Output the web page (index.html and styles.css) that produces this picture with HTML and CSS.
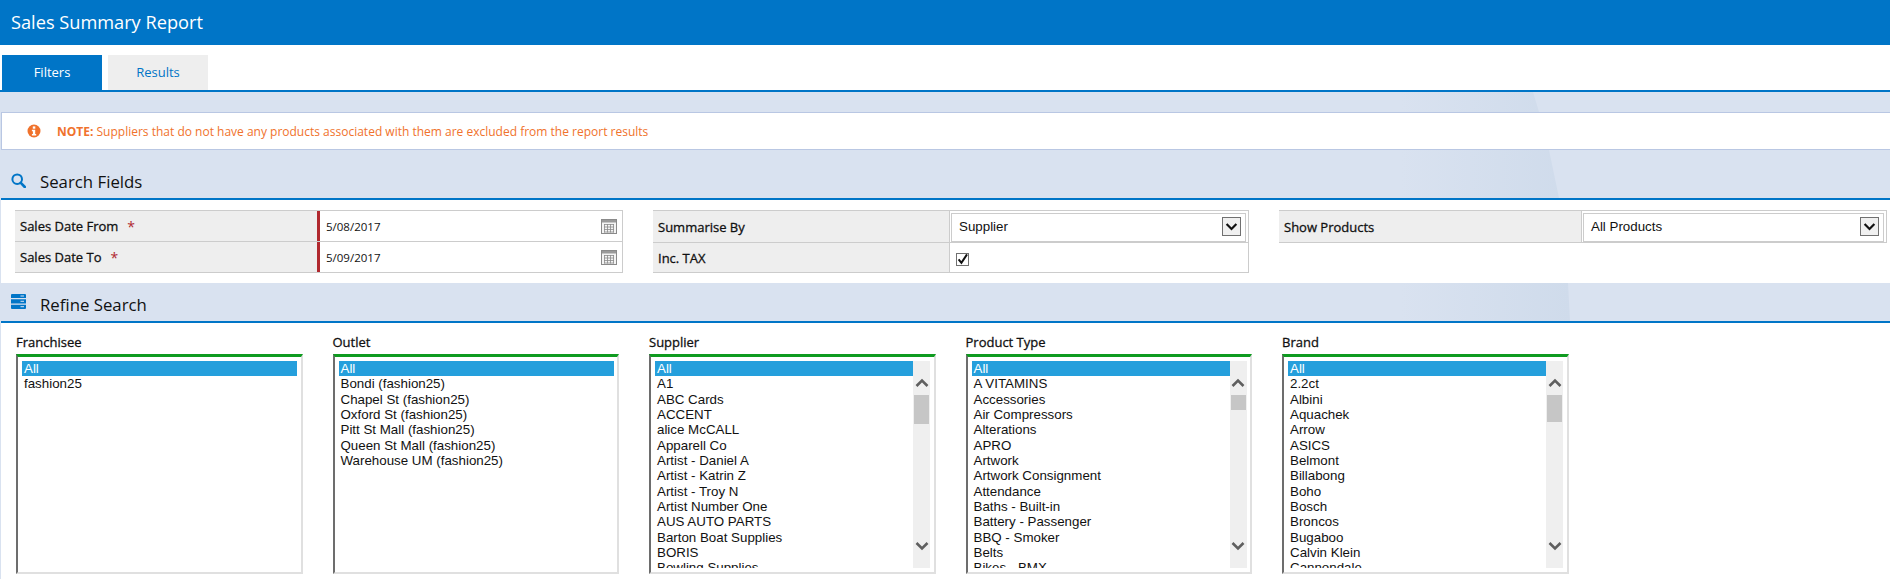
FILE: index.html
```html
<!DOCTYPE html>
<html lang="en">
<head>
<meta charset="utf-8">
<title>Sales Summary Report</title>
<link rel="stylesheet" href="styles.css">
</head>
<body>
<header class="app-title">Sales Summary Report</header>
<nav class="tabs">
  <a class="tab tab-active">Filters</a>
  <a class="tab">Results</a>
</nav>
<div class="band-gap"></div>
<div class="note">
  <svg class="note-icon" viewBox="0 0 14 14"><circle cx="7" cy="7" r="6.5" fill="#f0722c"/><rect x="5.8" y="2.4" width="2.5" height="2.3" fill="#fff"/><path d="M4.9 5.8h3.3v4.3h1v1.4H4.9v-1.4h1V7.2h-1z" fill="#fff"/></svg>
  <span class="note-text"><b>NOTE:</b> Suppliers that do not have any products associated with them are excluded from the report results</span>
</div>
<h2 class="section-head section-search">
  <svg class="section-icon" viewBox="0 0 15 15"><circle cx="6.2" cy="6.2" r="4.8" fill="none" stroke="#0075c7" stroke-width="2"/><path d="M9.8 9.8l4 4.2" stroke="#0075c7" stroke-width="2.6" stroke-linecap="round"/></svg>
  Search Fields
</h2>
<section class="panel panel-fields">
  <div class="ftable ftable-dates">
    <div class="frow">
      <div class="flabel">Sales Date From <span class="req">*</span></div>
      <div class="fvalue fvalue-date">5/08/2017
        <svg class="cal" viewBox="0 0 16 15"><rect x=".5" y=".5" width="15" height="14" fill="#f4f4f4" stroke="#8a8a8a"/><rect x="1" y="1" width="14" height="2.5" fill="#9a9a9a"/><path d="M3 5.5h10M3 8h10M3 10.5h10M3 13h10M3.5 5v8.5M6.5 5v8.5M9.5 5v8.5M12.5 5v8.5" stroke="#8a8a8a" stroke-width=".8" fill="none"/></svg>
      </div>
    </div>
    <div class="frow">
      <div class="flabel">Sales Date To <span class="req">*</span></div>
      <div class="fvalue fvalue-date">5/09/2017
        <svg class="cal" viewBox="0 0 16 15"><rect x=".5" y=".5" width="15" height="14" fill="#f4f4f4" stroke="#8a8a8a"/><rect x="1" y="1" width="14" height="2.5" fill="#9a9a9a"/><path d="M3 5.5h10M3 8h10M3 10.5h10M3 13h10M3.5 5v8.5M6.5 5v8.5M9.5 5v8.5M12.5 5v8.5" stroke="#8a8a8a" stroke-width=".8" fill="none"/></svg>
      </div>
    </div>
  </div>
  <div class="ftable ftable-summary">
    <div class="frow frow-select">
      <div class="flabel">Summarise By</div>
      <div class="fvalue fvalue-select"><div class="select">Supplier
        <span class="select-btn"><svg viewBox="0 0 17 17"><path d="M3.6 6l4.9 5 4.9-5" fill="none" stroke="#111" stroke-width="2.2"/></svg></span>
      </div></div>
    </div>
    <div class="frow frow-check">
      <div class="flabel">Inc. TAX</div>
      <div class="fvalue fvalue-check"><span class="checkbox"><svg viewBox="0 0 13 13"><path d="M2.6 6.4l2.8 3.4L11 1.4" fill="none" stroke="#111" stroke-width="2"/></svg></span></div>
    </div>
  </div>
  <div class="ftable ftable-show">
    <div class="frow frow-select">
      <div class="flabel">Show Products</div>
      <div class="fvalue fvalue-select"><div class="select">All Products
        <span class="select-btn"><svg viewBox="0 0 17 17"><path d="M3.6 6l4.9 5 4.9-5" fill="none" stroke="#111" stroke-width="2.2"/></svg></span>
      </div></div>
    </div>
  </div>
</section>
<h2 class="section-head section-refine">
  <svg class="section-icon" viewBox="0 0 15 15"><path d="M1 0h13a1 1 0 0 1 1 1v3H0V1a1 1 0 0 1 1-1zM0 5.3h15v4.1H0zM0 10.7h15V14a1 1 0 0 1-1 1H1a1 1 0 0 1-1-1z" fill="#0075c7"/><path d="M9.5 2h3.5M9.5 7.3h3.5M9.5 12.7h3.5" stroke="#d9e2f0" stroke-width="1"/></svg>
  Refine Search
</h2>
<section class="panel panel-lists">
  <div class="list-col">
    <div class="list-label">Franchisee</div>
    <div class="listbox">
      <ul class="list-items">
        <li class="selected">All</li><li>fashion25</li>
      </ul>
    </div>
  </div>
  <div class="list-col">
    <div class="list-label">Outlet</div>
    <div class="listbox">
      <ul class="list-items">
        <li class="selected">All</li><li>Bondi (fashion25)</li><li>Chapel St (fashion25)</li><li>Oxford St (fashion25)</li><li>Pitt St Mall (fashion25)</li><li>Queen St Mall (fashion25)</li><li>Warehouse UM (fashion25)</li>
      </ul>
    </div>
  </div>
  <div class="list-col">
    <div class="list-label">Supplier</div>
    <div class="listbox">
      <ul class="list-items">
        <li class="selected">All</li><li>A1</li><li>ABC Cards</li><li>ACCENT</li><li>alice McCALL</li><li>Apparell Co</li><li>Artist - Daniel A</li><li>Artist - Katrin Z</li><li>Artist - Troy N</li><li>Artist Number One</li><li>AUS AUTO PARTS</li><li>Barton Boat Supplies</li><li>BORIS</li><li>Bowling Supplies</li>
      </ul>
      <div class="scrollbar">
        <svg class="sb-arrow sb-up" viewBox="0 0 14 10"><path d="M1.5 8L7 2.5 12.5 8" fill="none" stroke="#5f5f5f" stroke-width="2.6"/></svg>
        <div class="sb-thumb" style="height:29px"></div>
        <svg class="sb-arrow sb-down" viewBox="0 0 14 10"><path d="M1.5 2L7 7.5 12.5 2" fill="none" stroke="#5f5f5f" stroke-width="2.6"/></svg>
      </div>
    </div>
  </div>
  <div class="list-col">
    <div class="list-label">Product Type</div>
    <div class="listbox">
      <ul class="list-items">
        <li class="selected">All</li><li>A VITAMINS</li><li>Accessories</li><li>Air Compressors</li><li>Alterations</li><li>APRO</li><li>Artwork</li><li>Artwork Consignment</li><li>Attendance</li><li>Baths - Built-in</li><li>Battery - Passenger</li><li>BBQ - Smoker</li><li>Belts</li><li>Bikes - BMX</li>
      </ul>
      <div class="scrollbar">
        <svg class="sb-arrow sb-up" viewBox="0 0 14 10"><path d="M1.5 8L7 2.5 12.5 8" fill="none" stroke="#5f5f5f" stroke-width="2.6"/></svg>
        <div class="sb-thumb" style="height:15px"></div>
        <svg class="sb-arrow sb-down" viewBox="0 0 14 10"><path d="M1.5 2L7 7.5 12.5 2" fill="none" stroke="#5f5f5f" stroke-width="2.6"/></svg>
      </div>
    </div>
  </div>
  <div class="list-col">
    <div class="list-label">Brand</div>
    <div class="listbox">
      <ul class="list-items">
        <li class="selected">All</li><li>2.2ct</li><li>Albini</li><li>Aquachek</li><li>Arrow</li><li>ASICS</li><li>Belmont</li><li>Billabong</li><li>Boho</li><li>Bosch</li><li>Broncos</li><li>Bugaboo</li><li>Calvin Klein</li><li>Cannondale</li>
      </ul>
      <div class="scrollbar">
        <svg class="sb-arrow sb-up" viewBox="0 0 14 10"><path d="M1.5 8L7 2.5 12.5 8" fill="none" stroke="#5f5f5f" stroke-width="2.6"/></svg>
        <div class="sb-thumb" style="height:27px"></div>
        <svg class="sb-arrow sb-down" viewBox="0 0 14 10"><path d="M1.5 2L7 7.5 12.5 2" fill="none" stroke="#5f5f5f" stroke-width="2.6"/></svg>
      </div>
    </div>
  </div>
</section>
</body>
</html>
```
FILE: styles.css
```css
* { box-sizing: border-box; }
html, body { margin: 0; padding: 0; }
body {
  position: relative;
  width: 1890px;
  height: 579px;
  overflow: hidden;
  background: #d9e2f0;
  font-family: "Open Sans", "Liberation Sans", sans-serif;
  color: #111;
}
/* the faint swoosh of the page's backdrop, seen through the blue bands */
body::before {
  content: "";
  position: absolute;
  z-index: -1;
  top: 92px;
  left: 1400px;
  width: 171px;
  height: 229px;
  background: linear-gradient(90deg, #d9e2f0 0, #cfdbeb 100%);
  clip-path: polygon(0 0, 133px 0, 139px 20px, 149px 58px, 159px 106px, 168px 191px, 170px 229px, 0 229px);
}
.app-title {
  height: 45px;
  padding-left: 11px;
  background: #0075c7;
  color: #fff;
  font-size: 18.2px;
  line-height: 44px;
}
.tabs {
  display: flex;
  gap: 6px;
  height: 47px;
  padding: 10px 0 0 2px;
  background: #fff;
  border-bottom: 2px solid #0075c7;
}
.tab {
  width: 100px;
  height: 35px;
  background: #eee;
  color: #0075c7;
  font-size: 13px;
  line-height: 35px;
  text-align: center;
}
.tab-active { background: #0075c7; color: #fff; }
.band-gap { height: 20px; }
.note {
  display: flex;
  align-items: center;
  height: 38px;
  margin-left: 1px;
  padding-left: 25px;
  background: #fff;
  border: 1px solid #b9c7e3;
  border-right: 0;
}
.note-icon { width: 14px; height: 14px; margin-right: 16px; }
.note-text { color: #f0722c; font-size: 12px; }
.note-text b { font-weight: 700; }
.section-head {
  display: flex;
  align-items: center;
  margin: 0 0 0 1px;
  padding-left: 10px;
  border-bottom: 2px solid #0075c7;
  color: #111;
  font-size: 16.8px;
  font-weight: 400;
}
.section-search { height: 50px; padding-top: 14px; }
.section-refine { height: 40px; padding-top: 5px; }
.section-icon { flex: none; width: 15px; height: 15px; margin-right: 14px; }
.section-search .section-icon { margin-top: -1px; }
.section-refine .section-icon { margin-top: -6px; }
.panel { margin-left: 1px; background: #fff; }
.panel-fields {
  display: flex;
  height: 83px;
  padding: 10px 0 0 14px;
}
.ftable {
  align-self: flex-start;
  border-top: 1px solid #ccc;
  border-right: 1px solid #ccc;
}
.ftable-dates { width: 608px; margin-right: 30px; }
.ftable-summary { width: 596px; margin-right: 30px; }
.ftable-show { width: 608px; }
.frow {
  display: flex;
  height: 31px;
  border-bottom: 1px solid #ccc;
  font-size: 13px;
}
.frow-select { height: 32px; }
.frow-check { height: 30px; }
.flabel {
  display: flex;
  align-items: center;
  gap: 9px;
  padding-left: 5px;
  background: #eee;
  -webkit-text-stroke: 0.3px #111;
}
.ftable-dates .flabel { width: 302px; }
.ftable-summary .flabel { width: 297px; border-right: 1px solid #ccc; }
.ftable-show .flabel { width: 303px; border-right: 1px solid #ccc; }
.req { color: #b0282e; font-size: 14px; -webkit-text-stroke: 0; }
.fvalue {
  position: relative;
  display: flex;
  flex: 1;
  align-items: center;
  min-width: 0;
}
.fvalue-date {
  justify-content: space-between;
  padding: 0 5px 0 6px;
  border-left: 3px solid #b0282e;
  font-size: 11.5px;
}
.cal { width: 16px; height: 15px; }
.fvalue-select { padding: 1px 2px 0 1px; }
.select {
  display: flex;
  flex: 1;
  align-items: center;
  justify-content: space-between;
  height: 29px;
  padding: 0 4px 2px 7px;
  border: 1px solid #ccc;
  font-family: "Liberation Sans", Arial, sans-serif;
  font-size: 13.33px;
  font-weight: 400;
}
.select-btn {
  width: 19px;
  height: 19px;
  background: #f0f0f0;
  border: 1px solid #707070;
}
.select-btn svg { display: block; width: 17px; height: 17px; }
.fvalue-check { padding: 3px 0 0 6px; }
.checkbox {
  width: 13px;
  height: 13px;
  background: #fff;
  border: 1px solid #707070;
}
.checkbox svg { display: block; width: 13px; height: 13px; margin: -1px; }
.panel-lists {
  display: grid;
  grid-template-columns: repeat(5, 286.5px);
  column-gap: 30px;
  height: 256px;
  padding: 11px 0 0 15px;
}
.list-label {
  height: 20px;
  font-size: 13px;
  -webkit-text-stroke: 0.3px #111;
  line-height: 16px;
}
.listbox {
  display: flex;
  height: 220px;
  padding: 4px 3.5px 4px 4px;
  border: 2px solid #e0e0e0;
  border-top: 3px solid #0f9b20;
  border-left: 2px solid #6d6d6d;
}
.list-items {
  flex: 1;
  min-width: 0;
  height: 207px;
  margin: 0;
  padding: 0;
  overflow: hidden;
  list-style: none;
  font-family: "Liberation Sans", Arial, sans-serif;
  font-size: 13.33px;
  line-height: 15.33px;
}
.list-items li { height: 15.33px; padding-left: 2px; white-space: nowrap; }
.list-items .selected { background: #259fdc; color: #fff; }
.scrollbar {
  display: flex;
  flex-direction: column;
  align-items: center;
  flex: none;
  width: 17px;
  height: 207px;
  padding: 17px 1px 0;
  background: #efefef;
}
.sb-arrow { flex: none; width: 14px; height: 10px; }
.sb-thumb { flex: none; width: 15px; margin-top: 7px; background: #c6c6c6; }
.sb-down { margin-top: auto; margin-bottom: 17px; }
```
